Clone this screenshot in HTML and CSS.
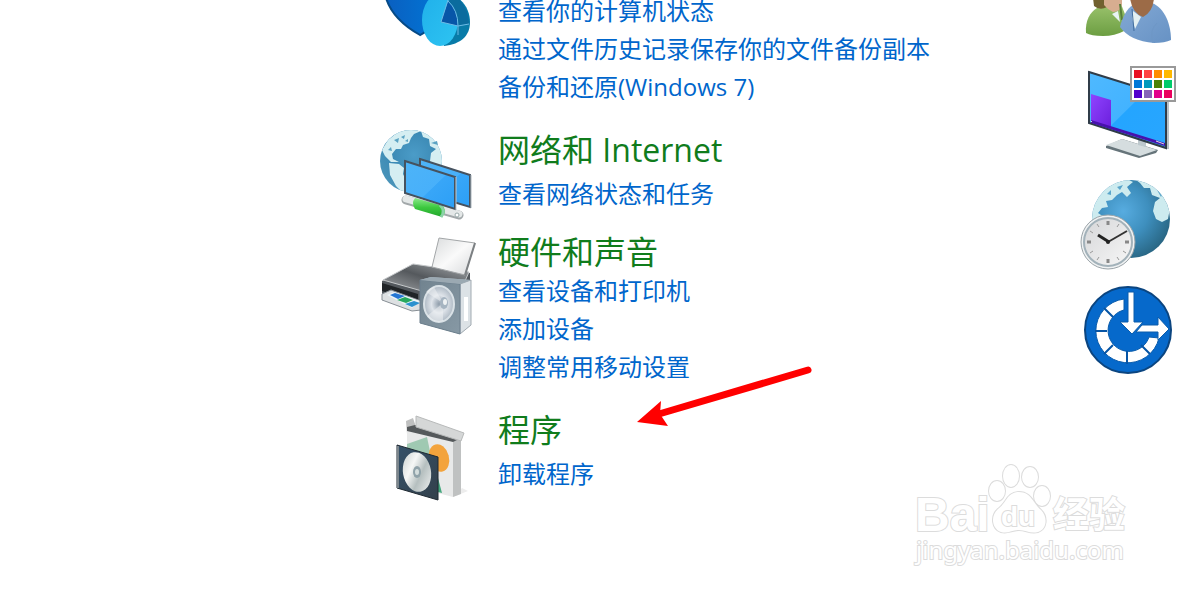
FILE: index.html
```html
<!DOCTYPE html>
<html lang="zh-CN">
<head>
  <meta charset="UTF-8">
  <title>控制面板</title>
  <link rel="stylesheet" href="styles.css">
</head>
<body>

  <main class="panel">

    <div class="categories">

      <section class="category category-long">
        <!-- shield with pie chart -->
        <svg class="icon" viewBox="376 0 100 50" width="100" height="50" aria-hidden="true">
          <defs>
            <linearGradient id="shield" x1="0" x2="1"><stop offset="0" stop-color="#0a5fc0"/><stop offset="1" stop-color="#0078d8"/></linearGradient>
            <linearGradient id="pie" x1="0" x2="1" y1="0" y2="1"><stop offset="0" stop-color="#20b0ea"/><stop offset="1" stop-color="#2ec4f2"/></linearGradient>
          </defs>
          <path d="M386-2C391 14 404 26 420 35L446 20V-2Z" fill="url(#shield)" stroke="#064a86" stroke-width="2"/>
          <path d="M440-6C460-8 470 8 470 22C470 36 461 44 444 46Z" fill="#087ba8"/>
          <ellipse cx="440" cy="20" rx="18" ry="26" fill="url(#pie)"/>
          <path d="M448 1L441 22L458 26Q458 10 448 1" fill="#0756a8"/>
          <path d="M448 1L456-4Q469 8 469 24L458 25Q457 9 448 1" fill="#0b6c9e"/>
          <path d="M448 0L441 22L458 26L469 24M448 1Q458 10 458 26V35" fill="none" stroke="#6dbbe6"/>
        </svg>
        <ul class="links">
          <li><a href="#">查看你的计算机状态</a></li>
          <li><a href="#">通过文件历史记录保存你的文件备份副本</a></li>
          <li><a href="#">备份和还原(Windows 7)</a></li>
        </ul>
      </section>

      <section class="category">
        <!-- globe with two screens -->
        <svg class="icon" viewBox="376 130 100 90" width="100" height="90" aria-hidden="true">
          <defs>
            <radialGradient id="globe" cx=".55" cy=".4" r=".62"><stop offset="0" stop-color="#4b9cc8"/><stop offset=".6" stop-color="#3c8ab5"/><stop offset="1" stop-color="#4a94b9"/></radialGradient>
            <linearGradient id="screen" x1="0" y1="0" x2="1" y2="1"><stop offset="0" stop-color="#4db4f8"/><stop offset=".55" stop-color="#48b0fa"/><stop offset=".56" stop-color="#38a6f8"/><stop offset="1" stop-color="#2c9ff6"/></linearGradient>
            <linearGradient id="pipe" x1="0" x2="0" y1="0" y2="1"><stop offset="0" stop-color="#8be98a"/><stop offset=".5" stop-color="#3cc83f"/><stop offset="1" stop-color="#22a52b"/></linearGradient>
            <clipPath id="globe-clip"><circle cx="411" cy="161" r="31"/></clipPath>
          </defs>
          <circle cx="411" cy="161" r="31" fill="url(#globe)"/>
          <g clip-path="url(#globe-clip)" fill="#d5eef2">
            <path d="M382 150L388 140L398 132L411 129L421 131L414 134L411 138L409 143L403 145L401 149L396 149L392 154L393 159L399 162L391 162L385 156Z"/>
            <path d="M389 163L399 164L404 168L403 174L406 180L407 187L413 193H403L396 186L390 175Z"/>
            <path d="M421 131L431 133L440 143L443 155V170H434L430 161L431 153L436 149L430 146L429 139L423 137Z"/>
          </g>
          <path d="M394 140L399 138L398 143ZM401 137L405 135L404 139ZM388 150L391 147L392 151ZM405 141L408 139L408 142ZM431 143L437 141L438 145Z" fill="#5ba3c3"/>
          <path d="M420 159L470 175V207L420 192Z" fill="url(#screen)" stroke="#46525f" stroke-width="2"/>
          <path d="M471 175V208" stroke="#aab4bb"/>
          <path d="M406 200L459 215" stroke="#a2a8aa" stroke-width="9" stroke-linecap="round"/>
          <path d="M406 199L459 214" stroke="#e4e8e8" stroke-width="7" stroke-linecap="round"/>
          <path d="M415 198L443 206Q447 212 442 217L415 209Q411 203 415 198Z" fill="url(#pipe)"/>
          <path d="M440 205Q446 211 441 217" fill="none" stroke="#8ad3a6" stroke-width="3"/>
          <circle cx="457" cy="215" r="2" fill="#fff" stroke="#9aa"/>
          <path d="M405 161L455 177V209L405 193Z" fill="url(#screen)" stroke="#46525f" stroke-width="2"/>
          <path d="M456 177V210" stroke="#c2cad0"/>
        </svg>
        <div class="text">
          <h2><a href="#">网络和 Internet</a></h2>
          <ul class="links links-single">
            <li><a href="#">查看网络状态和任务</a></li>
          </ul>
        </div>
      </section>

      <section class="category category-long">
        <!-- printer and speaker -->
        <svg class="icon" viewBox="376 232 100 106" width="100" height="106" aria-hidden="true">
          <defs>
            <linearGradient id="paper" x1="0" y1="0" x2="1" y2="1"><stop offset="0" stop-color="#d9dbdc"/><stop offset=".5" stop-color="#fafafa"/><stop offset="1" stop-color="#d6d8da"/></linearGradient>
            <linearGradient id="lid" x1="0" x2="1" y1="1" y2="0"><stop offset="0" stop-color="#a1a4a7"/><stop offset=".5" stop-color="#55595d"/><stop offset="1" stop-color="#a7abae"/></linearGradient>
            <linearGradient id="speaker" x1="0" x2="1" y1="0" y2="1"><stop offset="0" stop-color="#71838f"/><stop offset="1" stop-color="#8799a5"/></linearGradient>
            <radialGradient id="cone"><stop offset="0" stop-color="#8f9dab"/><stop offset=".5" stop-color="#dfe4ea"/><stop offset="1" stop-color="#aeb9c4"/></radialGradient>
          </defs>
          <path d="M382 281L412 265L470 273V290L418 308L382 294Z" fill="#53585d"/>
          <path d="M382 283L418 294V302L382 291Z" fill="#202427"/>
          <path d="M383 280L413 264L469 272L465 281L422 291Z" fill="url(#lid)" stroke="#c5c8ca"/>
          <path d="M439 238L475 243L465 275L432 267Z" fill="url(#paper)" stroke="#a3a6a8" stroke-width="1"/>
          <path d="M475 243L465 275" stroke="#7c8083" stroke-width="2"/>
          <path d="M382 294L391 290L421 301V310L412 311L382 300Z" fill="#dde0e2" stroke="#888f95"/>
          <path d="M387 295L394 292L420 301L412 308Z" fill="#edf5f8"/>
          <path d="M390 295L395 293L405 296L398 299Z" fill="#2476d3"/>
          <path d="M397 300L405 297L413 300L406 303Z" fill="#28a85f"/>
          <path d="M405 304L414 301L420 303L412 307Z" fill="#2b91cf"/>
          <path d="M420 280L431 277L471 280L470 325L460 334L420 323Z" fill="#adb9c2"/>
          <path d="M460 284L471 280V325L460 334Z" fill="#dce2e6" stroke="#a2abb2"/>
          <path d="M420 280L460 284V334L420 323Z" fill="url(#speaker)" stroke="#6c7f8d"/>
          <path d="M420 280L431 277L471 280L460 284Z" fill="#9ba9b2"/>
          <ellipse cx="439" cy="304" rx="15" ry="18" fill="url(#cone)" stroke="#d9e1e6" stroke-width="2"/>
          <path d="M443 303L426 292Q429 288 434 287ZM443 303L427 316Q434 324 443 321Z" fill="#f2f4f6" opacity=".5"/>
          <ellipse cx="444" cy="303" rx="4" ry="6" fill="#a6b4c1"/>
          <ellipse cx="445" cy="302" rx="2" ry="3" fill="#eef1f3"/>
          <path d="M466 297V321" stroke="#fff" stroke-width="4"/>
        </svg>
        <div class="text">
          <h2><a href="#">硬件和声音</a></h2>
          <ul class="links">
            <li><a href="#">查看设备和打印机</a></li>
            <li><a href="#">添加设备</a></li>
            <li><a href="#">调整常用移动设置</a></li>
          </ul>
        </div>
      </section>

      <section class="category">
        <!-- software box and disc -->
        <svg class="icon" viewBox="376 410 100 92" width="100" height="92" aria-hidden="true">
          <defs>
            <linearGradient id="case" x1="0" y1="0" x2="1" y2="1"><stop offset="0" stop-color="#345169"/><stop offset="1" stop-color="#33404b"/></linearGradient>
            <linearGradient id="disc" x1="0" y1="0" x2="1" y2="1"><stop offset="0" stop-color="#c3cccb"/><stop offset=".35" stop-color="#f6f7f6"/><stop offset=".6" stop-color="#b5bfbf"/><stop offset="1" stop-color="#f4f5f5"/></linearGradient>
          </defs>
          <path d="M453 497L468 491L462 488Z" fill="#ededed"/>
          <path d="M406 421L413 418L417 430L407 434Z" fill="#bfc0c0"/>
          <path d="M407 427L415 425L462 438L453 443L407 432Z" fill="#55595b"/>
          <path d="M407 431L453 442V497L407 485Z" fill="#e8e9e9"/>
          <path d="M453 442L461 438V494L453 497Z" fill="#bfc1c1"/>
          <path d="M416 416L464 433L461 441L416 427Z" fill="#d5d7d7" stroke="#b8baba"/>
          <path d="M407 444L427 437L432 461L407 454Z" fill="#9fc9b2"/>
          <ellipse cx="439" cy="458" rx="10" ry="14" transform="rotate(-15 439 458)" fill="#f3a33c"/>
          <path d="M438 478L442 493L438 492Z" fill="#43a77d"/>
          <path d="M397 445L438 457V500L397 488Z" fill="url(#case)" stroke="#1f2931"/>
          <path d="M398 446V488" stroke="#7b858c" stroke-width="2"/>
          <ellipse cx="417" cy="472" rx="14" ry="20" transform="rotate(-10 417 472)" fill="url(#disc)"/>
          <ellipse cx="417" cy="472" rx="4" ry="6" fill="#90a2a9"/>
          <ellipse cx="417" cy="472" rx="2" ry="3" fill="#d4dddd"/>
        </svg>
        <div class="text">
          <h2><a href="#">程序</a></h2>
          <ul class="links links-single">
            <li><a href="#">卸载程序</a></li>
          </ul>
        </div>
      </section>

    </div>

    <div class="side">

      <!-- user accounts -->
      <svg viewBox="1076 0 104 52" width="104" height="52" aria-hidden="true">
        <defs>
          <linearGradient id="green" x1="0" x2="0" y1="0" y2="1"><stop offset="0" stop-color="#9bc36d"/><stop offset="1" stop-color="#6c9e42"/></linearGradient>
          <linearGradient id="blue" x1="0" x2="1" y1="0" y2="1"><stop offset="0" stop-color="#83a9d5"/><stop offset="1" stop-color="#6792c4"/></linearGradient>
        </defs>
        <path d="M1086 33C1085 21 1090 12 1097 8L1108 4H1121L1128 22L1124 31Q1115 36 1103 36Q1091 36 1086 33Z" fill="url(#green)"/>
        <path d="M1093-2H1106L1107 7Q1100 11 1094 6Z" fill="#71602f"/>
        <path d="M1104-2H1122V5Q1120 12 1113 12Q1108 10 1104 5Z" fill="#d7ad90"/>
        <path d="M1112 14L1118 11L1120 22Z" fill="#e8f3f3"/>
        <path d="M1120 4L1122 20" stroke="#587f3b" stroke-width="2"/>
        <path d="M1120 27C1122 18 1127 8 1133 5L1152 3C1165 8 1171 25 1171 40Q1165 43 1154 43Q1130 41 1120 27Z" fill="url(#blue)"/>
        <path d="M1153 43Q1149 30 1157 23" fill="none" stroke="#6e97c6"/>
        <path d="M1130-2H1154Q1153 12 1143 17Q1132 13 1130-2Z" fill="#9c6b47"/>
        <path d="M1133 11L1141 17L1135 29L1132 18Z" fill="#e3f0f2"/>
        <path d="M1132 9L1134 31" stroke="#426e9e"/>
      </svg>

      <!-- display with colour palette -->
      <svg viewBox="1076 62 104 100" width="104" height="100" aria-hidden="true">
        <defs>
          <linearGradient id="display" x1="0" x2="1" y1="0" y2="1"><stop offset="0" stop-color="#4fb9ff"/><stop offset=".49" stop-color="#43b3ff"/><stop offset=".5" stop-color="#24a5ff"/><stop offset="1" stop-color="#29a6ff"/></linearGradient>
          <linearGradient id="window" x1="0" x2="1" y1="0" y2="1"><stop offset="0" stop-color="#8f44ff"/><stop offset="1" stop-color="#6c20dd"/></linearGradient>
        </defs>
        <path d="M1106 146L1122 139L1158 150L1156 153L1139 158L1106 148Z" fill="#66747a"/>
        <path d="M1106 145L1122 139L1157 150L1140 156Z" fill="#d5dddf"/>
        <path d="M1138 137L1146 139V147L1138 145Z" fill="#bdc8cd"/>
        <path d="M1166 93L1169 94V149L1166 149Z" fill="#bac2c8"/>
        <path d="M1089 72L1166 96V148L1089 123Z" fill="url(#display)" stroke="#303c48" stroke-width="2"/>
        <path d="M1091 94L1111 100V127L1091 121Z" fill="url(#window)"/>
        <path d="M1091 120L1165 143V146L1091 123Z" fill="#4811ad"/>
        <path d="M1091 121L1092 122M1156 141L1164 144" stroke="#ddd"/>
        <rect x="1131" y="67" width="44" height="34" fill="#fff" stroke="#999" stroke-width="2"/>
        <g>
          <path fill="#e81123" d="M1134 70h8v8h-8z"/><path fill="#ff4343" d="M1144 70h8v8h-8z"/><path fill="#ff8c00" d="M1154 70h8v8h-8z"/><path fill="#ffb900" d="M1164 70h8v8h-8z"/>
          <path fill="#0078d7" d="M1134 80h8v8h-8z"/><path fill="#0099bc" d="M1144 80h8v8h-8z"/><path fill="#498205" d="M1154 80h8v8h-8z"/><path fill="#00cc6a" d="M1164 80h8v8h-8z"/>
          <path fill="#5400cc" d="M1134 90h8v8h-8z"/><path fill="#8764b8" d="M1144 90h8v8h-8z"/><path fill="#e3008c" d="M1154 90h8v8h-8z"/><path fill="#ea005e" d="M1164 90h8v8h-8z"/>
        </g>
      </svg>

      <!-- globe with clock -->
      <svg viewBox="1076 172 104 100" width="104" height="100" aria-hidden="true">
        <defs>
          <radialGradient id="earth" cx=".4" cy=".4" r=".65"><stop offset="0" stop-color="#57ace0"/><stop offset=".5" stop-color="#3e8fbe"/><stop offset="1" stop-color="#286582"/></radialGradient>
          <linearGradient id="dial" x1="0" x2="1" y1="0" y2="1"><stop offset="0" stop-color="#d5d6d8"/><stop offset="1" stop-color="#f7f7f7"/></linearGradient>
          <clipPath id="earth-clip"><circle cx="1131" cy="219" r="39"/></clipPath>
        </defs>
        <circle cx="1131" cy="219" r="39" fill="url(#earth)"/>
        <g clip-path="url(#earth-clip)" fill="#cdebef">
          <path d="M1092 210L1099 194L1112 184L1127 179L1133 182L1127 187L1131 193L1127 197L1122 192L1117 195L1112 200L1106 201L1108 207L1102 208L1098 213L1104 217L1100 220H1092Z"/>
          <path d="M1136 180L1147 181L1161 191L1170 208L1168 219L1162 222L1156 219L1153 211L1155 202L1160 198L1152 195L1150 188L1144 188L1140 183Z"/>
          <path d="M1117 187L1123 185L1120 190ZM1107 194L1111 190L1111 195ZM1157 190L1163 193L1161 197Z" fill="#5ba6cb"/>
        </g>
        <circle cx="1108" cy="242" r="27" fill="#f0f2f3" stroke="#9ba4a9" stroke-width="1"/>
        <circle cx="1108" cy="242" r="24" fill="url(#dial)" stroke="#a3b2ba" stroke-width="2"/>
        <path d="M1108 221V225M1108 259V263M1087 242H1091M1125 242H1129" stroke="#888" stroke-width="3"/>
        <path d="M1097 224L1099 227M1119 224L1117 227M1090 231L1093 233M1126 253L1123 251M1090 253L1093 251M1097 260L1099 257M1119 260L1117 257" stroke="#999"/>
        <path d="M1108 242L1127 231" stroke="#333" stroke-width="2"/>
        <path d="M1109 242L1098 235" stroke="#222" stroke-width="3"/>
        <circle cx="1108" cy="242" r="2" fill="#222"/>
      </svg>

      <!-- ease of access -->
      <svg viewBox="1076 282 104 100" width="104" height="100" aria-hidden="true">
        <circle cx="1128" cy="330" r="43" fill="#0669cb" stroke="#0b4580" stroke-width="2"/>
        <path d="M1124 299A32 32 0 1 0 1159 338L1149 337A21 21 0 1 1 1124 310Z" fill="#fff" stroke="#0b5cab" stroke-width="1"/>
        <path d="M1104 308L1113 317M1095 331H1107M1104 354L1113 345M1127 351V364M1141 345L1150 354" stroke="#0755a5" stroke-width="2"/>
        <path d="M1128 292H1134V322H1143L1132 334L1120 322H1128Z" fill="#fff" stroke="#0b5cab" stroke-width="1"/>
        <path d="M1142 325H1158V317L1169 329L1158 340V332H1136Z" fill="#fff" stroke="#0b5cab" stroke-width="1"/>
      </svg>

    </div>

    <svg class="arrow" viewBox="636 364 178 64" width="178" height="64" aria-hidden="true">
      <path d="M808 370L659 414" stroke="#f00" stroke-width="7" stroke-linecap="round"/>
      <path d="M637 422L661 401L660 414L668 426Z" fill="#f00"/>
    </svg>

    <svg class="watermark" viewBox="912 460 220 110" width="220" height="110" role="img" aria-label="Baidu 经验">
      <text class="mark-name" x="915" y="531">Bai</text>
      <g class="mark-paw">
        <ellipse cx="997" cy="491" rx="8" ry="10"/>
        <ellipse cx="1011" cy="476" rx="8" ry="11"/>
        <ellipse cx="1030" cy="477" rx="8" ry="10"/>
        <ellipse cx="1042" cy="496" rx="8" ry="10"/>
        <path d="M1019 492C1007 492 1006 504 998 509C990 516 992 529 1001 532C1008 534 1012 530 1019 530C1026 530 1030 534 1038 532C1047 529 1048 517 1041 510C1033 503 1031 492 1019 492Z"/>
      </g>
      <text class="mark-du" x="1001" y="526">du</text>
      <text class="mark-cn" x="1053" y="528">经验</text>
      <text class="mark-url" x="916" y="559">jingyan.baidu.com</text>
    </svg>

  </main>

</body>
</html>
```
FILE: styles.css
```css
body {
  margin: 0;
  background-color: #fff;
  font-family: "Open Sans", "Noto Sans CJK SC", sans-serif;
  overflow-x: hidden;
}
a {
  text-decoration: none;
  color: inherit;
}
a:hover {
  text-decoration: underline;
}
svg {
  display: block;
  fill: none;
}
/* === Layout === */
.panel {
  position: relative;
  display: flex;
  justify-content: space-between;
  min-height: 100vh;
  padding: 0 14px 0 376px;
  box-sizing: border-box;
  overflow: hidden;
}
.categories {
  display: flex;
  flex-direction: column;
  gap: 12px;
}
.side {
  display: flex;
  flex-direction: column;
  gap: 10px;
}
/* === Categories === */
.category {
  display: flex;
  align-items: flex-start;
  gap: 22px;
}
.category-long {
  padding-bottom: 12px;
}
.icon {
  flex: none;
}
.category h2 {
  margin: 0;
  font-size: 32px;
  font-weight: normal;
  line-height: 40px;
  color: #107c1c;
}
.links {
  margin: 0;
  padding: 0;
  list-style: none;
  font-size: 24px;
  line-height: 38px;
  color: #0066cc;
}
.links-single {
  margin-top: 5px;
}
/* the panel is scrolled, the first list starts above the edge */
.icon + .links {
  margin-top: -8px;
}
/* === Overlays === */
.arrow {
  position: absolute;
  top: 364px;
  left: 636px;
}
.watermark {
  position: absolute;
  right: 62px;
  bottom: 22px;
  fill: #fff;
  stroke: #dcdcdc;
  stroke-width: 2px;
  paint-order: stroke;
}
.mark-name {
  font: bold 48px "Liberation Sans", sans-serif;
}
.mark-du {
  font: bold 28px "Liberation Sans", sans-serif;
}
.mark-cn {
  font: bold 36px "Noto Sans CJK SC", sans-serif;
}
.mark-url {
  font: 24px "Noto Sans", sans-serif;
}
```
